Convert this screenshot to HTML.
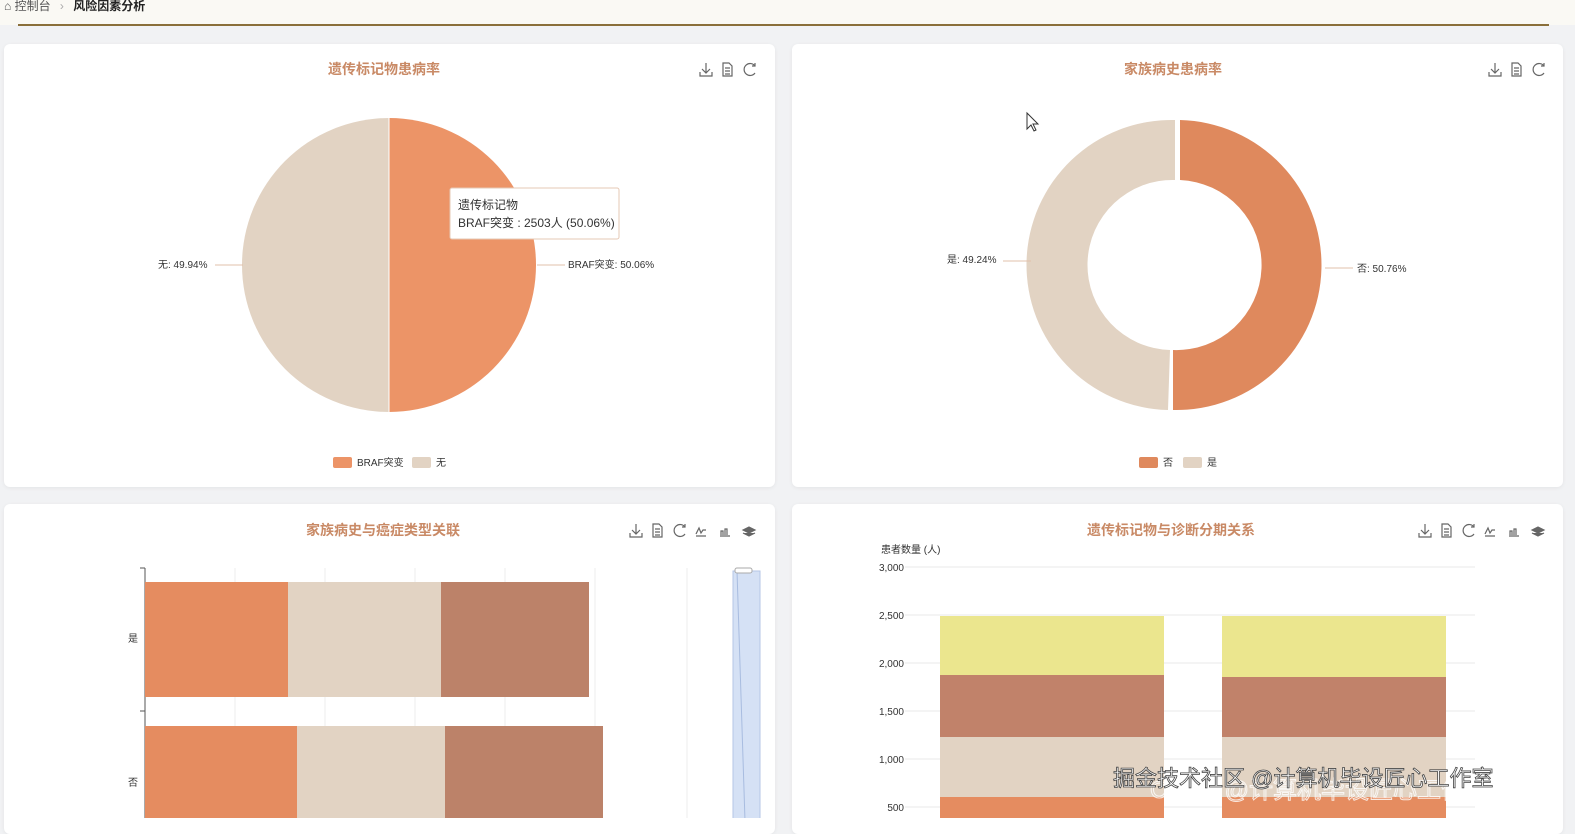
<!DOCTYPE html>
<html><head><meta charset="utf-8"><style>
body{margin:0;width:1575px;height:818px;overflow:hidden;background:#f1f2f4;font-family:"Liberation Sans","Noto Sans CJK SC",sans-serif;position:relative}
.top{position:absolute;left:0;top:0;width:1575px;height:25px;background:#faf9f4}
.line{position:absolute;left:18px;top:24px;width:1531px;height:2px;background:#8a6f3a}
.card{position:absolute;background:#fff;border-radius:6px;box-shadow:0 1px 4px rgba(0,0,0,.06)}
.t{position:absolute;font-size:14px;font-weight:bold;color:#c98a66;white-space:nowrap}
.s{font-size:10px;fill:#333}
</style></head><body>
<div class="top"></div>
<div style="position:absolute;left:4px;top:-3px;font-size:12px;color:#555">⌂ 控制台 <span style="color:#aaa;margin:0 6px">›</span> <b style="color:#222">风险因素分析</b></div>
<div class="line"></div>
<div class="card" style="left:4px;top:44px;width:771px;height:443px"></div>
<div class="card" style="left:792px;top:44px;width:771px;height:443px"></div>
<div class="card" style="left:4px;top:504px;width:771px;height:330px"></div>
<div class="card" style="left:792px;top:504px;width:771px;height:330px"></div>
<div class="t" style="left:328px;top:59px">遗传标记物患病率</div>
<div class="t" style="left:1124px;top:59px">家族病史患病率</div>
<div class="t" style="left:306px;top:520px">家族病史与癌症类型关联</div>
<div class="t" style="left:1087px;top:520px">遗传标记物与诊断分期关系</div>
<svg width="1575" height="818" style="position:absolute;left:0;top:0">
<g stroke="#666" fill="none" stroke-width="1.2">
<g id="ic"><path d="M706 63v10M702 69l4 4 4-4M700 72v4h12v-4"/><path d="M723 63h6l3 3v10h-9zM725 68h5M725 71h5M725 74h5"/><path d="M755 66a6 6 0 1 0 0 7M755 63v3h-3"/></g>
<use href="#ic" x="789"/>
<use href="#ic" x="-70" y="461"/>
<use href="#ic" x="719" y="461"/>
<g id="ic2"><path d="M696 534l3-6 2 5 2-3h3M696 536h10"/><path d="M720 536h10M721 535v-4h2v4M725 535v-6h2v6"/><path d="M743 530l6-3 6 3-6 3zM743 533l6 3 6-3" fill="#666"/></g>
<use href="#ic2" x="789"/>
</g>
<path d="M389 118A147 147 0 0 1 389 412Z" fill="#ec9467"/>
<path d="M389 118A147 147 0 0 0 389 412Z" fill="#e2d3c3"/>
<line x1="389" y1="118" x2="389" y2="412" stroke="#fff"/>
<path d="M215 265h28M537 265h28" stroke="#e2c0ab"/>
<text x="158" y="268" class="s">无: 49.94%</text>
<text x="568" y="268" class="s">BRAF突变: 50.06%</text>
<rect x="450" y="188" width="169" height="51" fill="#fff" stroke="#e6c8b5" rx="2"/>
<text x="458" y="209" style="font-size:12px;fill:#333">遗传标记物</text>
<text x="458" y="227" style="font-size:12px;fill:#333">BRAF突变 : 2503人 (50.06%)</text>
<rect x="333" y="457" width="19" height="11" rx="2" fill="#ec9467"/><text x="357" y="466" class="s">BRAF突变</text>
<rect x="412" y="457" width="19" height="11" rx="2" fill="#e2d3c3"/><text x="436" y="466" class="s">无</text>
<path d="M1180 120A145 145 0 0 1 1173 410L1173 350A85 85 0 0 0 1180 180Z" fill="#df895d"/>
<path d="M1175 120A145 145 0 0 0 1168 410L1170 350A85 85 0 0 1 1175 180Z" fill="#e2d3c3"/>
<path d="M1003 261h28M1325 268h28" stroke="#e2c0ab"/>
<text x="947" y="263" class="s">是: 49.24%</text>
<text x="1357" y="272" class="s">否: 50.76%</text>
<rect x="1139" y="457" width="19" height="11" rx="2" fill="#df895d"/><text x="1163" y="466" class="s">否</text>
<rect x="1183" y="457" width="19" height="11" rx="2" fill="#e2d3c3"/><text x="1207" y="466" class="s">是</text>
<g stroke="#eee"><path d="M235 568v250M325 568v250M415 568v250M505 568v250M595 568v250M687 568v250"/></g>
<path d="M145 568v250M140 568h5M140 711h5" stroke="#555"/>
<rect x="145" y="582" width="143" height="115" fill="#e58c60"/><rect x="288" y="582" width="153" height="115" fill="#e2d3c3"/><rect x="441" y="582" width="148" height="115" fill="#bc8269"/>
<rect x="145" y="726" width="152" height="100" fill="#e58c60"/><rect x="297" y="726" width="148" height="100" fill="#e2d3c3"/><rect x="445" y="726" width="158" height="100" fill="#bc8269"/>
<text x="128" y="642" class="s">是</text><text x="128" y="786" class="s">否</text>
<rect x="733" y="571" width="27" height="250" fill="#d5e1f5" stroke="#b5c6e6"/>
<path d="M737 571l8 250" stroke="#a8bce0"/>
<rect x="735" y="568" width="17" height="5" rx="2" fill="#fff" stroke="#aaa"/>
<text x="881" y="553" class="s">患者数量 (人)</text>
<g stroke="#e8e8e8"><path d="M905 567h570M905 615h570M905 663h570M905 711h570M905 759h570M905 807h570"/></g>
<g class="s" text-anchor="end"><text x="904" y="571">3,000</text><text x="904" y="619">2,500</text><text x="904" y="667">2,000</text><text x="904" y="715">1,500</text><text x="904" y="763">1,000</text><text x="904" y="811">500</text></g>
<rect x="940" y="616" width="224" height="59" fill="#ebe68e"/><rect x="940" y="675" width="224" height="62" fill="#c1826a"/><rect x="940" y="737" width="224" height="60" fill="#e2d3c3"/><rect x="940" y="797" width="224" height="30" fill="#e58c60"/>
<rect x="1222" y="616" width="224" height="61" fill="#ebe68e"/><rect x="1222" y="677" width="224" height="60" fill="#c1826a"/><rect x="1222" y="737" width="224" height="60" fill="#e2d3c3"/><rect x="1222" y="797" width="224" height="30" fill="#e58c60"/>
<text x="1150" y="798" style="font-size:24px;fill:none;stroke:#fff;stroke-width:1;opacity:.8">CSDN @计算机毕设匠心工作室</text>
<text x="1113" y="786" style="font-size:22px;fill:#fff;stroke:#444;stroke-width:.8">掘金技术社区 @计算机毕设匠心工作室</text>
<path d="M1027 113v16l4-4 3 6 2-1-3-6h5z" fill="#fff" stroke="#333"/>
</svg>
</body></html>
